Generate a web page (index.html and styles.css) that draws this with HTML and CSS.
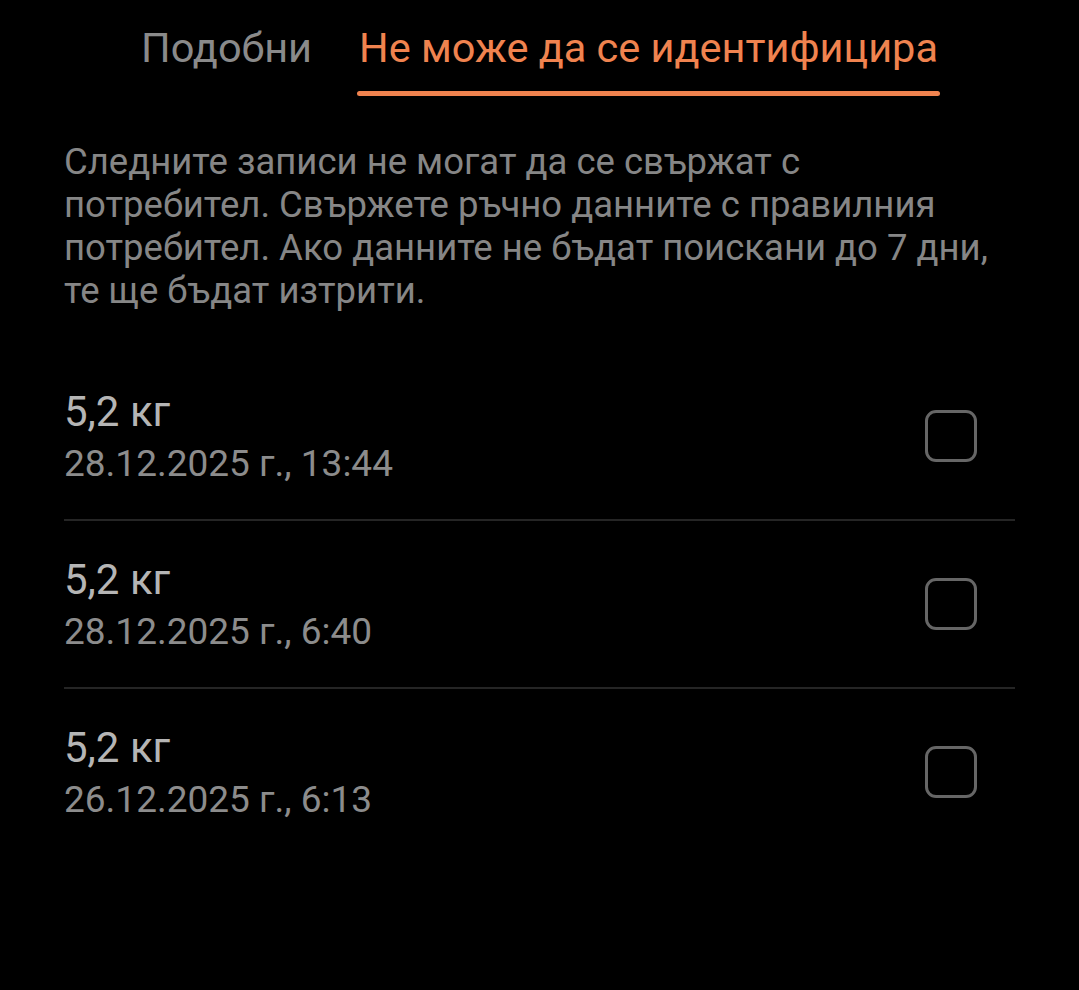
FILE: index.html
```html
<!DOCTYPE html>
<html lang="bg">
<head>
<meta charset="utf-8">
<link rel="stylesheet" href="styles.css">
</head>
<body>
<div class="page">
  <nav class="tabs">
    <div class="tab">Подобни</div>
    <div class="tab active">Не може да се идентифицира</div>
  </nav>
  <p class="info">Следните записи не могат да се свържат с потребител. Свържете ръчно данните с правилния потребител. Ако данните не бъдат поискани до 7 дни, те ще бъдат изтрити.</p>
  <ul class="list">
    <li class="row">
      <div class="texts"><div class="title">5,2 кг</div><div class="sub">28.12.2025 г., 13:44</div></div>
      <span class="check"></span>
    </li>
    <li class="row">
      <div class="texts"><div class="title">5,2 кг</div><div class="sub">28.12.2025 г., 6:40</div></div>
      <span class="check"></span>
    </li>
    <li class="row last">
      <div class="texts"><div class="title">5,2 кг</div><div class="sub">26.12.2025 г., 6:13</div></div>
      <span class="check"></span>
    </li>
  </ul>
</div>
</body>
</html>
```
FILE: styles.css
```css
html, body {
  margin: 0;
  padding: 0;
  background: #000;
}
body {
  font-family: Roboto, "Noto Sans", sans-serif;
  width: 1079px;
  height: 990px;
  overflow: hidden;
}
.page {
  padding: 0 64px;
}
.tabs {
  display: flex;
  justify-content: center;
  gap: 47px;
  padding-top: 24px;
}
.tab {
  font-size: 41.5px;
  line-height: 48px;
  color: #8a8a8a;
  padding-bottom: 19px;
  border-bottom: 5px solid transparent;
}
.tab.active {
  color: #f0834f;
  border-bottom: 0;
  position: relative;
}
.tab.active::after {
  content: "";
  position: absolute;
  left: -2px;
  right: -2px;
  bottom: 0;
  height: 5px;
  border-radius: 3px;
  background: #f0834f;
}
.info {
  margin: 44px 0 0;
  font-size: 36.5px;
  line-height: 43px;
  color: #868686;
}
.list {
  list-style: none;
  margin: 41px 0 0;
  padding: 0;
}
.row {
  display: flex;
  align-items: center;
  justify-content: space-between;
  padding: 33px 38px 29px 0;
  border-bottom: 2px solid #252525;
}
.row.last {
  border-bottom: 0;
}
.title {
  font-size: 42px;
  line-height: 52px;
  color: #b5b5b5;
}
.sub {
  font-size: 37px;
  line-height: 52px;
  color: #8c8c8c;
}
.check {
  width: 46px;
  height: 46px;
  border: 3px solid #666;
  border-radius: 11px;
  margin-top: -4px;
}
```
